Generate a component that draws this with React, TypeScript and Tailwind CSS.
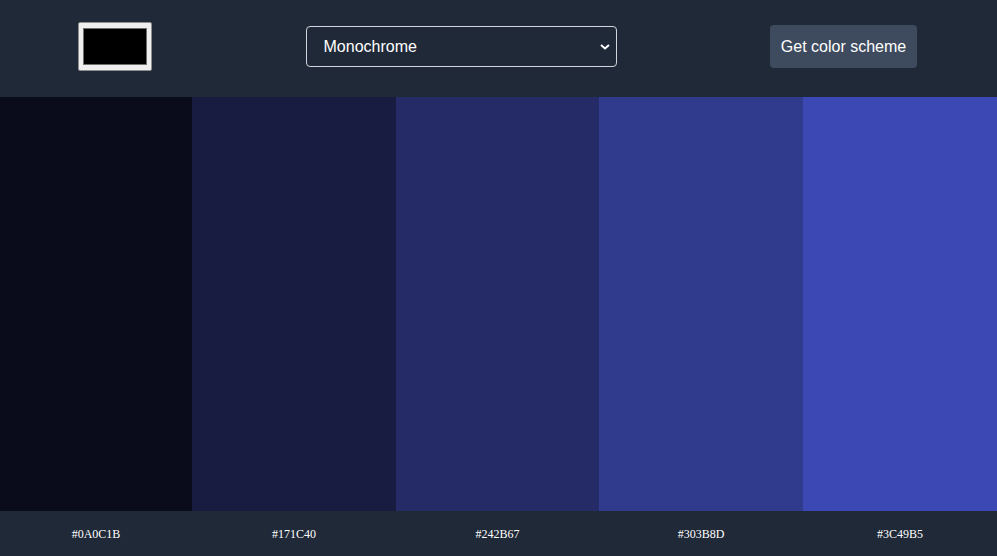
import React from "react";

const colors = ["#0A0C1B", "#171C40", "#242B67", "#303B8D", "#3C49B5"];

export default function App() {
  return (
    <div className="flex h-[556px] w-[997px] flex-col bg-[#1f2937] font-['Liberation_Sans',Arial,sans-serif]">
      {/* Header */}
      <header className="flex h-[97px] shrink-0 items-center justify-between pb-[4px] pl-[78px] pr-[80px]">
        <div className="flex h-[49px] w-[74px] rounded-[2px] border border-[#8f8f8f] bg-[#efefef] px-[4px] pt-[5px] pb-[5px]">
          <div className="h-full w-full border border-[#6f6f6f] bg-black" />
        </div>

        <div className="flex h-[41px] w-[311px] items-center justify-between rounded-[4px] border border-[#d1d5db] pl-[17px] pr-[6px] text-[16px] text-white">
          <span>Monochrome</span>
          <svg width="10" height="6" viewBox="0 0 10 6" fill="none" className="mt-[1px]">
            <path d="M1 1l4 3.5L9 1" stroke="white" strokeWidth="2" />
          </svg>
        </div>

        <button
          type="button"
          className="h-[43px] w-[147px] rounded-[4px] bg-[#3e4b5e] text-[16px] text-white"
        >
          Get color scheme
        </button>
      </header>

      {/* Palette */}
      <div className="grid flex-1 grid-cols-[192px_204px_203px_204px_194px]">
        {colors.map((c) => (
          <div key={c} className="flex flex-col">
            <div className="flex-1" style={{ backgroundColor: c }} />
            <p className="flex h-[45px] items-center justify-center font-['Liberation_Serif','Times_New_Roman',serif] text-[12px] text-white">
              {c}
            </p>
          </div>
        ))}
      </div>
    </div>
  );
}
